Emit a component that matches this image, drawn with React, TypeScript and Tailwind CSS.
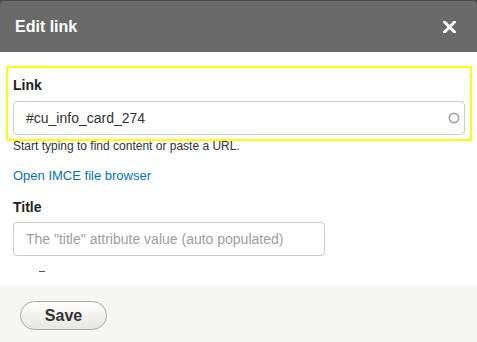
import React from "react";

export default function App() {
  return (
    <div className="w-[477px] h-[342px] overflow-hidden bg-[#4a4a4a] font-['Liberation_Sans',Arial,sans-serif]">
      <div className="mt-[1px] h-[341px] rounded-t-[4px] overflow-hidden flex flex-col">
        <div className="h-[51px] shrink-0 bg-[#6a6a6a] flex items-center justify-between pl-[15px] pr-[21px]">
          <span className="text-[16px] font-bold text-white leading-[20px]">Edit link</span>
          <svg width="13" height="12" viewBox="0 0 13 12" className="block">
            <path d="M1.5 1 L11.5 11 M11.5 1 L1.5 11" stroke="#ffffff" strokeWidth="3" strokeLinecap="square" />
          </svg>
        </div>
        <div className="h-[233px] shrink-0 bg-white overflow-hidden pt-[14px]">
          <div className="ml-[6px] mr-[5px] border-2 border-[#ffff00] px-[5px] pt-[9px] pb-[4px]">
            <div className="text-[14px] leading-[16px] font-bold text-[#222]">Link</div>
            <div className="mt-[8px] h-[34px] border border-[#cccccc] rounded-[4px] flex items-center justify-between pl-[12px] pr-[4px]">
              <span className="text-[14px] leading-[16px] text-[#333]">#cu_info_card_274</span>
              <svg width="12" height="12" viewBox="0 0 12 12" className="block shrink-0">
                <circle cx="6" cy="6" r="4.6" fill="none" stroke="#a8a8a8" strokeWidth="1.8" />
              </svg>
            </div>
          </div>
          <div className="px-[13px]">
            <div className="mt-[-2px] text-[12px] leading-[15px] text-[#333]">
              Start typing to find content or paste a URL.
            </div>
            <div className="mt-[14px] text-[13px] leading-[16px] text-[#0074bd]">Open IMCE file browser</div>
            <div className="mt-[15px] text-[14px] leading-[16px] font-bold text-[#222]">Title</div>
            <div className="mt-[7px] w-[312px] h-[34px] border border-[#cccccc] rounded-[4px] flex items-center pl-[12px]">
              <span className="text-[14px] leading-[16px] text-[#a0a0a0]">
                The "title" attribute value (auto populated)
              </span>
            </div>
            <div className="mt-[15px] ml-[26px] w-[6px] h-[1px] bg-[#555]" />
          </div>
        </div>
        <div className="flex-1 bg-[#f5f5f2] pt-[16px] pl-[20px]">
          <button className="w-[87px] h-[29px] rounded-full border border-[#a8a8a8] bg-gradient-to-b from-[#fefefe] to-[#e6e6e2] text-[16px] leading-[18px] font-bold text-[#333] flex items-center justify-center">
            Save
          </button>
        </div>
      </div>
    </div>
  );
}
